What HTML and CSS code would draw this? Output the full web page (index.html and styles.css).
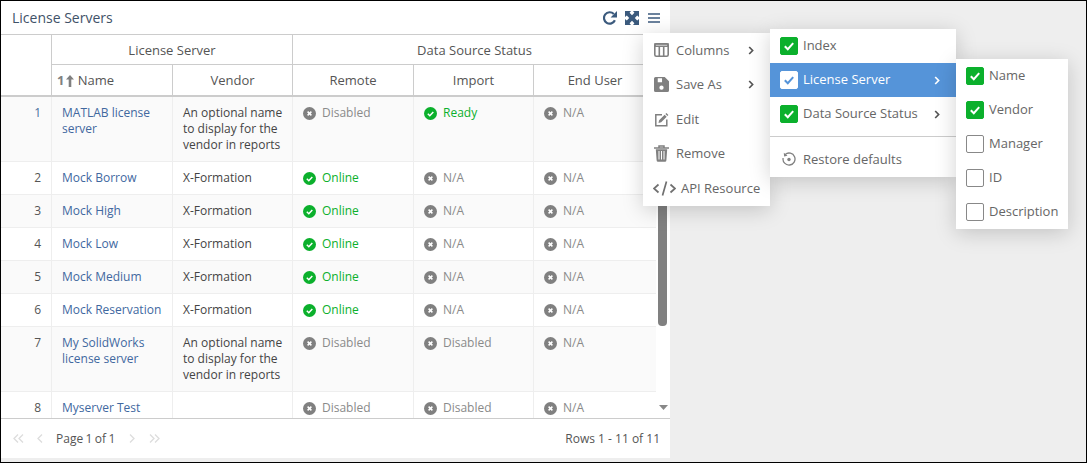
FILE: index.html
```html
<!DOCTYPE html>
<html lang="en">
<head>
<meta charset="utf-8">
<title>License Servers</title>
<link rel="stylesheet" href="styles.css">
</head>
<body>
<svg class="defs" width="0" height="0" aria-hidden="true">
  <symbol id="off" viewBox="0 0 13 13"><circle cx="6.5" cy="6.5" r="6.5" fill="#808080"/><path d="M4.6 4.6l3.8 3.8M8.4 4.6l-3.8 3.8" stroke="#fff" stroke-width="1.5" fill="none"/></symbol>
  <symbol id="on" viewBox="0 0 13 13"><circle cx="6.5" cy="6.5" r="6.5" fill="#0bb02c"/><path d="M3.8 6.8l2 1.9 3.5-3.8" stroke="#fff" stroke-width="1.5" fill="none"/></symbol>
  <symbol id="chev" viewBox="0 0 6 9"><path d="M1.200 1l3.400 3.500-3.400 3.500" stroke="currentColor" stroke-width="1.700" fill="none"/></symbol>
  <symbol id="tick" viewBox="0 0 18 18"><path d="M4.800 9.200l3 3 5.400-6" stroke="currentColor" stroke-width="2" fill="none"/></symbol>
</svg>

<main class="panel">
  <header class="titlebar">
    <h1 class="title">License Servers</h1>
    <div class="tools">
      <svg class="tool" width="14" height="14" viewBox="0 0 14 14"><path d="M11.900 9.300A5.700 5.700 0 1 1 10.800 3" stroke="#3b5a7d" stroke-width="2.200" fill="none"/><path d="M14 0v6.400H7.600z" fill="#3b5a7d"/></svg>
      <svg class="tool tool-expand" width="14" height="14" viewBox="0 0 14 14"><path d="M0 0h6L4.600 1.800 7 4.200 9.400 1.800 8 0h6v6l-1.800-1.400L9.800 7l2.400 2.400L14 8v6H8l1.400-1.800L7 9.800l-2.400 2.400L6 14H0V8l1.800 1.400L4.200 7 1.800 4.600 0 6z" fill="#3b5a7d"/></svg>
      <svg class="tool" width="12" height="10" viewBox="0 0 12 10"><path d="M0 1h12M0 5h12M0 9h12" stroke="#3b5a7d" stroke-width="1.500"/></svg>
    </div>
  </header>

  <div class="grid-head">
    <table class="table">
      <colgroup><col class="c0"><col class="c1"><col class="c2"><col class="c3"><col class="c4"><col class="c5"></colgroup>
      <thead>
        <tr class="group-row">
          <th rowspan="2" class="corner"></th>
          <th colspan="2">License Server</th>
          <th colspan="3" class="last">Data Source Status</th>
        </tr>
        <tr class="col-row">
          <th class="sorted"><span class="sort-num">1</span><svg class="sort-arrow" width="8" height="12" viewBox="0 0 8 12"><path d="M4 0l4 4.500H5.300V12H2.700V4.500H0z" fill="#808080"/></svg> Name</th>
          <th>Vendor</th>
          <th>Remote</th>
          <th>Import</th>
          <th class="last">End User</th>
        </tr>
      </thead>
    </table>
  </div>

  <div class="grid-body">
    <div class="rows">
      <table class="table">
        <colgroup><col class="c0"><col class="c1"><col class="c2"><col class="c3"><col class="c4"><col class="c5"></colgroup>
        <tbody>
          <tr>
            <td class="idx first">1</td><td><a class="link">MATLAB license server</a></td><td>An optional name to display for the vendor in reports</td>
            <td><span class="st"><svg class="si"><use href="#off"/></svg>Disabled</span></td>
            <td><span class="st ok"><svg class="si"><use href="#on"/></svg>Ready</span></td>
            <td class="last"><span class="st"><svg class="si"><use href="#off"/></svg>N/A</span></td>
          </tr>
          <tr>
            <td class="idx">2</td><td><a class="link">Mock Borrow</a></td><td>X-Formation</td>
            <td><span class="st ok"><svg class="si"><use href="#on"/></svg>Online</span></td>
            <td><span class="st"><svg class="si"><use href="#off"/></svg>N/A</span></td>
            <td class="last"><span class="st"><svg class="si"><use href="#off"/></svg>N/A</span></td>
          </tr>
          <tr>
            <td class="idx">3</td><td><a class="link">Mock High</a></td><td>X-Formation</td>
            <td><span class="st ok"><svg class="si"><use href="#on"/></svg>Online</span></td>
            <td><span class="st"><svg class="si"><use href="#off"/></svg>N/A</span></td>
            <td class="last"><span class="st"><svg class="si"><use href="#off"/></svg>N/A</span></td>
          </tr>
          <tr>
            <td class="idx">4</td><td><a class="link">Mock Low</a></td><td>X-Formation</td>
            <td><span class="st ok"><svg class="si"><use href="#on"/></svg>Online</span></td>
            <td><span class="st"><svg class="si"><use href="#off"/></svg>N/A</span></td>
            <td class="last"><span class="st"><svg class="si"><use href="#off"/></svg>N/A</span></td>
          </tr>
          <tr>
            <td class="idx">5</td><td><a class="link">Mock Medium</a></td><td>X-Formation</td>
            <td><span class="st ok"><svg class="si"><use href="#on"/></svg>Online</span></td>
            <td><span class="st"><svg class="si"><use href="#off"/></svg>N/A</span></td>
            <td class="last"><span class="st"><svg class="si"><use href="#off"/></svg>N/A</span></td>
          </tr>
          <tr>
            <td class="idx">6</td><td><a class="link">Mock Reservation</a></td><td>X-Formation</td>
            <td><span class="st ok"><svg class="si"><use href="#on"/></svg>Online</span></td>
            <td><span class="st"><svg class="si"><use href="#off"/></svg>N/A</span></td>
            <td class="last"><span class="st"><svg class="si"><use href="#off"/></svg>N/A</span></td>
          </tr>
          <tr>
            <td class="idx">7</td><td><a class="link">My SolidWorks license server</a></td><td>An optional name to display for the vendor in reports</td>
            <td><span class="st"><svg class="si"><use href="#off"/></svg>Disabled</span></td>
            <td><span class="st"><svg class="si"><use href="#off"/></svg>Disabled</span></td>
            <td class="last"><span class="st"><svg class="si"><use href="#off"/></svg>N/A</span></td>
          </tr>
          <tr>
            <td class="idx">8</td><td><a class="link">Myserver Test</a></td><td></td>
            <td><span class="st"><svg class="si"><use href="#off"/></svg>Disabled</span></td>
            <td><span class="st"><svg class="si"><use href="#off"/></svg>Disabled</span></td>
            <td class="last"><span class="st"><svg class="si"><use href="#off"/></svg>N/A</span></td>
          </tr>
        </tbody>
      </table>
    </div>
    <div class="scrollbar">
      <div class="thumb"></div>
      <svg class="scroll-down" width="9" height="5" viewBox="0 0 9 5"><path d="M0 0h9L4.500 5z" fill="#888"/></svg>
    </div>
  </div>

  <footer class="pager">
    <div class="pager-left">
      <svg class="pg pg-first" width="11" height="9" viewBox="0 0 11 9"><path d="M5 .5L1 4.500 5 8.500M10 .5L6 4.500l4 4" stroke="#ddd" stroke-width="1.300" fill="none"/></svg>
      <svg class="pg pg-prev" width="6" height="9" viewBox="0 0 6 9"><path d="M5 .5L1 4.500l4 4" stroke="#ddd" stroke-width="1.300" fill="none"/></svg>
      <span class="page-text page-count">Page 1 of 1</span>
      <svg class="pg pg-next" width="6" height="9" viewBox="0 0 6 9"><path d="M1 .5l4 4-4 4" stroke="#ddd" stroke-width="1.300" fill="none"/></svg>
      <svg class="pg pg-last" width="11" height="9" viewBox="0 0 11 9"><path d="M1 .5l4 4-4 4M6 .5l4 4-4 4" stroke="#ddd" stroke-width="1.300" fill="none"/></svg>
    </div>
    <span class="page-text">Rows 1 - 11 of 11</span>
  </footer>
</main>

<nav class="menu menu-main">
  <div class="item">
    <svg class="mi" width="15" height="14" viewBox="0 0 15 14"><rect x=".8" y=".8" width="13.400" height="12.400" rx="1.500" stroke="#808080" stroke-width="1.600" fill="none"/><path d="M1 3.200h13V1H1zM5.300 3v10M9.700 3v10" stroke="#808080" stroke-width="1.600" fill="none"/></svg>
    <span class="label">Columns</span><svg class="chev main-chev"><use href="#chev"/></svg>
  </div>
  <div class="item">
    <svg class="mi" width="15" height="15" viewBox="0 0 14 14"><path fill-rule="evenodd" d="M1.500 0H10l4 4v8.500a1.500 1.500 0 0 1-1.500 1.500h-11A1.500 1.500 0 0 1 0 12.500v-11A1.500 1.500 0 0 1 1.500 0zM3.500 1.200v3.600h4V1.200zM7 8a2 2 0 1 0 0 4 2 2 0 0 0 0-4z" fill="#808080"/></svg>
    <span class="label">Save As</span><svg class="chev main-chev"><use href="#chev"/></svg>
  </div>
  <div class="item item-low">
    <svg class="mi" width="15" height="15" viewBox="0 0 15 15"><path d="M8 2.800H1.800v11h11V7.500" stroke="#808080" stroke-width="1.500" fill="none"/><path d="M4.500 11l.6-2.800 5.500-5.500 2.100 2.100-5.500 5.500zM11.400 1.900l1-1 2 2-1 1z" fill="#808080"/></svg>
    <span class="label">Edit</span>
  </div>
  <div class="item item-low">
    <svg class="mi" width="15" height="17" viewBox="0 0 15 17"><path d="M0 3h15M5 3V1h5v2" stroke="#808080" stroke-width="1.500" fill="none"/><path d="M1.800 4.200h11.400l-.8 11a1.500 1.500 0 0 1-1.500 1.500H4.100a1.500 1.500 0 0 1-1.500-1.500z" fill="#808080"/><path d="M5 6v8.500M7.500 6v8.500M10 6v8.500" stroke="#fff" stroke-width="1"/></svg>
    <span class="label">Remove</span>
  </div>
  <div class="item item-api">
    <svg class="mi-api" width="23" height="15" viewBox="0 0 23 15"><path d="M5.500 3.500L1 7.500l4.500 4M17.500 3.500l4.500 4-4.500 4M13.500.5l-4 14" stroke="#707070" stroke-width="1.700" fill="none"/></svg>
    <span class="label">API Resource</span>
  </div>
</nav>

<nav class="menu menu-cols">
  <div class="item"><span class="cb on"><svg width="18" height="18"><use href="#tick"/></svg></span><span class="label">Index</span></div>
  <div class="item active"><span class="cb inv"><svg width="18" height="18"><use href="#tick"/></svg></span><span class="label">License Server</span><svg class="chev sub-chev"><use href="#chev"/></svg></div>
  <div class="item"><span class="cb on"><svg width="18" height="18"><use href="#tick"/></svg></span><span class="label">Data Source Status</span><svg class="chev sub-chev"><use href="#chev"/></svg></div>
  <div class="divider"></div>
  <div class="item item-restore">
    <svg class="mi-restore" width="14" height="14" viewBox="0 0 14 14"><path d="M3.200 2.400A6 6 0 1 1 1.100 6" stroke="#808080" stroke-width="1.300" fill="none"/><path d="M1.800.8l.3 3.600 3.400-.6z" fill="#808080"/><circle cx="7" cy="7.500" r="1.700" fill="#808080"/></svg>
    <span class="label">Restore defaults</span>
  </div>
</nav>

<nav class="menu menu-server">
  <div class="item"><span class="cb on"><svg width="18" height="18"><use href="#tick"/></svg></span><span class="label">Name</span></div>
  <div class="item"><span class="cb on"><svg width="18" height="18"><use href="#tick"/></svg></span><span class="label">Vendor</span></div>
  <div class="item"><span class="cb"></span><span class="label">Manager</span></div>
  <div class="item"><span class="cb"></span><span class="label">ID</span></div>
  <div class="item"><span class="cb"></span><span class="label">Description</span></div>
</nav>
</body>
</html>
```

FILE: styles.css
```css
* { box-sizing: border-box; }

html, body { height: 100%; }

body {
  margin: 0;
  position: relative;
  height: 463px;
  overflow: hidden;
  background: #eee;
  border: 1px solid #000;
  font-family: "Open Sans", "DejaVu Sans", sans-serif;
  font-size: 12px;
  line-height: 16px;
  color: #444;
}

.defs { position: absolute; }

.panel {
  width: 669px;
  height: 457px;
  display: flex;
  flex-direction: column;
  background: #fff;
}

.titlebar {
  flex: none;
  height: 34px;
  display: flex;
  align-items: center;
  justify-content: space-between;
  padding: 0 10px 0 11px;
  border-bottom: 1px solid #ccc;
}

.title {
  margin: 0;
  font-size: 14px;
  font-weight: 400;
  color: #3f5268;
}

.tools {
  display: flex;
  align-items: center;
  gap: 8px;
  padding-top: 1px;
}

.tool-expand { margin-right: 1px; }

.table {
  table-layout: fixed;
  width: 655px;
  border-collapse: separate;
  border-spacing: 0;
}

.c0 { width: 51px; }
.c1 { width: 121px; }
.c2 { width: 120px; }
.c3 { width: 121px; }
.c4 { width: 120px; }
.c5 { width: 122px; }

.grid-head { flex: none; }

.grid-head th {
  padding: 0;
  font-size: 13px;
  font-weight: 400;
  color: #555;
  text-align: center;
  border-right: 1px solid #ccc;
  border-bottom: 1px solid #ccc;
}

.group-row th { height: 30px; }

.col-row th {
  height: 32px;
  border-bottom-width: 2px;
}

.grid-head .corner { border-bottom-width: 2px; }
.grid-head .last { border-right: 0; }

.sort-num { font-weight: 700; color: #808080; }
.sort-arrow { margin: 0 0 -2px 2px; }
.grid-head .sorted { text-align: left; padding-left: 5px; }

.grid-body {
  flex: 1;
  min-height: 0;
  display: flex;
}

.rows {
  width: 655px;
  overflow: hidden;
}

.rows td {
  padding: 8px 4px 8px 10px;
  vertical-align: top;
  border-right: 1px solid #eee;
  border-bottom: 1px solid #eee;
}

.rows tr:nth-child(odd) td { background: #fafafa; }
.rows .last { border-right: 0; }

.rows .idx {
  text-align: right;
  padding-right: 10px;
  color: #555;
}

.rows .first { color: #4a6f9e; }

.link { color: #41689f; }

.st {
  display: flex;
  align-items: center;
  gap: 6px;
  color: #8a8a8a;
}

.st.ok { color: #0bb02c; }

.si {
  flex: none;
  width: 13px;
  height: 13px;
}

.scrollbar {
  flex: 1;
  position: relative;
  display: flex;
  flex-direction: column;
  align-items: center;
  justify-content: flex-end;
  padding-bottom: 8px;
}

.thumb {
  position: absolute;
  top: 0;
  left: 2px;
  width: 9px;
  height: 229px;
  background: #808080;
  border-radius: 0 0 4px 4px;
}

.pager {
  flex: none;
  height: 40px;
  display: flex;
  align-items: center;
  justify-content: space-between;
  padding: 0 10px 0 12px;
  border-top: 1px solid #ccc;
}

.pager-left {
  display: flex;
  align-items: center;
}

.page-text { color: #555; }
.page-count { word-spacing: -.7px; margin-left: 13px; }

.pg-prev { margin-left: 13px; }
.pg-next { margin-left: 14px; }
.pg-last { margin-left: 14px; }

.menu {
  position: absolute;
  background: #fff;
  box-shadow: 0 4px 20px rgba(0, 0, 0, .18);
  font-size: 13px;
  color: #666;
}

.menu-main { left: 642px; top: 32px; width: 127px; height: 173px; }
.menu-cols { left: 769px; top: 28px; width: 186px; height: 148px; }
.menu-server { left: 955px; top: 58px; width: 112px; height: 170px; }

.item {
  height: 34px;
  display: flex;
  align-items: center;
  position: relative;
  padding-left: 10px;
}

.menu-cols .label, .menu-server .label { margin-top: -2px; }
.menu-cols .item-restore .label { margin-top: 0; }

.menu-main .item { padding-left: 11px; }
.menu-main .label { margin-left: 7px; }
.menu-main .item-low { padding-top: 2px; }

.mi { flex: none; }

.menu-main .item-api { padding: 4px 0 0 10px; }
.mi-api { flex: none; margin-right: -2px; }

.cb {
  flex: none;
  width: 18px;
  height: 18px;
  margin-right: 5px;
  border: 1px solid #888;
  border-radius: 2px;
  background: #fff;
  position: relative;
}

.cb svg {
  position: absolute;
  left: -1px;
  top: -1px;
}

.cb.on {
  background: #0bb02c;
  border-color: #0bb02c;
  color: #fff;
}

.cb.inv {
  border-color: #fff;
  color: #5594d9;
}

.active {
  background: #5594d9;
  color: #fff;
}

.chev {
  position: absolute;
  width: 6px;
  height: 9px;
}

.main-chev { left: 105px; top: 13px; color: #555; }
.sub-chev { left: 164px; top: 13px; color: #555; }
.active .sub-chev { color: #fff; }

.divider {
  height: 1px;
  margin: 5px 0;
  background: #ccc;
}

.item-restore { padding-left: 12px; }
.mi-restore { flex: none; margin-right: 7px; }
```
